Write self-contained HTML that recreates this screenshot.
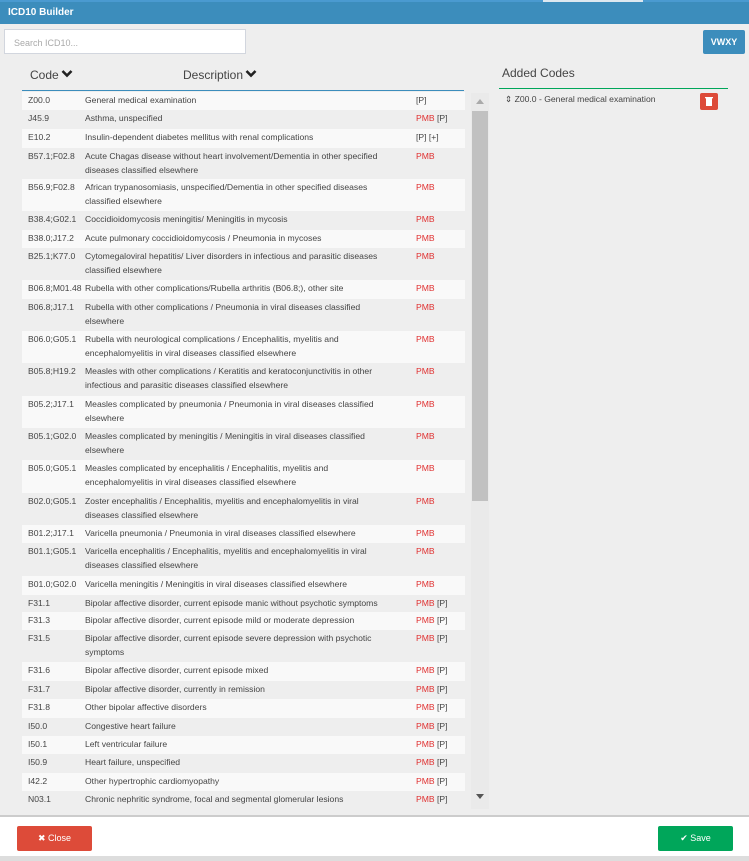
<!DOCTYPE html>
<html><head><meta charset="utf-8"><style>
*{box-sizing:border-box;margin:0;padding:0}
body{width:749px;height:861px;background:#eee;font-family:"Liberation Sans",sans-serif;position:relative;overflow:hidden;color:#333}
.hdr{position:absolute;left:0;top:0;width:749px;height:24px;background:#3c8dbc;border-top:2px solid #4a9ad0}
.hdr span{position:absolute;left:8px;top:5px;color:#fff;font-size:10px;font-weight:bold}
.tab{position:absolute;left:543px;top:0;width:100px;height:2px;background:#dde8f0}
.search{position:absolute;left:4px;top:29px;width:242px;height:25px;background:#fff;border:1px solid #d2d6de;font-size:9px;color:#aaa;padding:8px 9px}
.vw{position:absolute;left:703px;top:30px;width:42px;height:24px;background:#3c8dbc;border-radius:2px;color:#fff;font-size:9px;font-weight:bold;text-align:center;line-height:24px}
.th{position:absolute;top:68px;font-size:12px;color:#444}
.th svg{vertical-align:1px;margin-left:2px}
.line{position:absolute;left:22px;top:90px;width:442px;height:1px;background:#3c8dbc}
.row{position:absolute;left:22px;width:443px;font-size:8.6px;color:#444;line-height:14px;white-space:nowrap}
.row .c{position:absolute;left:6px;top:1px}
.row .d{position:absolute;left:63px;top:1px}
.row .p{position:absolute;left:394px;top:1px}
.r{color:#e03030}
.l{background:#f9f9f9}
.sb{position:absolute;left:471px;top:93px;width:18px;height:716px;background:#eaeaea}
.thumb{position:absolute;left:472px;top:111px;width:16px;height:390px;background:#c1c1c1}
.ac{position:absolute;left:502px;top:66px;font-size:12px;color:#444}
.gl{position:absolute;left:499px;top:88px;width:229px;height:1px;background:#00a65a}
.it{position:absolute;left:505px;top:94px;font-size:8.6px;color:#444}
.del{position:absolute;left:700px;top:93px;width:18px;height:17px;background:#dd4b39;border-radius:2px}
.foot{position:absolute;left:0;top:815px;width:749px;height:41px;background:#fff;border-top:2px solid #ccc}
.bb{position:absolute;left:0;top:856px;width:749px;height:5px;background:#ddd}
.btn{position:absolute;top:826px;height:25px;border-radius:2px;color:#fff;font-size:9px;text-align:center;line-height:25px}
</style></head><body>
<div class="hdr"><span>ICD10 Builder</span></div>
<div class="tab"></div>
<div class="search">Search ICD10...</div>
<div class="vw">VWXY</div>
<div class="th" style="left:30px">Code<svg width="12" height="9"><path d="M1.5 2L6 6.5L10.5 2" stroke="#222" stroke-width="2.6" fill="none"/></svg></div>
<div class="th" style="left:183px">Description<svg width="12" height="9"><path d="M1.5 2L6 6.5L10.5 2" stroke="#222" stroke-width="2.6" fill="none"/></svg></div>
<div class="line"></div>

<div class="row l" style="top:92px;height:18px"><span class="c">Z00.0</span><span class="d">General medical examination</span><span class="p">[P]</span></div>
<div class="row" style="top:110px;height:19px"><span class="c">J45.9</span><span class="d">Asthma, unspecified</span><span class="p"><span class="r">PMB</span> [P]</span></div>
<div class="row l" style="top:129px;height:19px"><span class="c">E10.2</span><span class="d">Insulin-dependent diabetes mellitus with renal complications</span><span class="p">[P] [+]</span></div>
<div class="row" style="top:148px;height:31px"><span class="c">B57.1;F02.8</span><span class="d">Acute Chagas disease without heart involvement/Dementia in other specified<br>diseases classified elsewhere</span><span class="p r">PMB</span></div>
<div class="row l" style="top:179px;height:32px"><span class="c">B56.9;F02.8</span><span class="d">African trypanosomiasis, unspecified/Dementia in other specified diseases<br>classified elsewhere</span><span class="p r">PMB</span></div>
<div class="row" style="top:211px;height:19px"><span class="c">B38.4;G02.1</span><span class="d">Coccidioidomycosis meningitis/ Meningitis in mycosis</span><span class="p r">PMB</span></div>
<div class="row l" style="top:230px;height:18px"><span class="c">B38.0;J17.2</span><span class="d">Acute pulmonary coccidioidomycosis / Pneumonia in mycoses</span><span class="p r">PMB</span></div>
<div class="row" style="top:248px;height:32px"><span class="c">B25.1;K77.0</span><span class="d">Cytomegaloviral hepatitis/ Liver disorders in infectious and parasitic diseases<br>classified elsewhere</span><span class="p r">PMB</span></div>
<div class="row l" style="top:280px;height:19px"><span class="c">B06.8;M01.48</span><span class="d">Rubella with other complications/Rubella arthritis (B06.8;), other site</span><span class="p r">PMB</span></div>
<div class="row" style="top:299px;height:32px"><span class="c">B06.8;J17.1</span><span class="d">Rubella with other complications / Pneumonia in viral diseases classified<br>elsewhere</span><span class="p r">PMB</span></div>
<div class="row l" style="top:331px;height:32px"><span class="c">B06.0;G05.1</span><span class="d">Rubella with neurological complications / Encephalitis, myelitis and<br>encephalomyelitis in viral diseases classified elsewhere</span><span class="p r">PMB</span></div>
<div class="row" style="top:363px;height:33px"><span class="c">B05.8;H19.2</span><span class="d">Measles with other complications / Keratitis and keratoconjunctivitis in other<br>infectious and parasitic diseases classified elsewhere</span><span class="p r">PMB</span></div>
<div class="row l" style="top:396px;height:32px"><span class="c">B05.2;J17.1</span><span class="d">Measles complicated by pneumonia / Pneumonia in viral diseases classified<br>elsewhere</span><span class="p r">PMB</span></div>
<div class="row" style="top:428px;height:32px"><span class="c">B05.1;G02.0</span><span class="d">Measles complicated by meningitis / Meningitis in viral diseases classified<br>elsewhere</span><span class="p r">PMB</span></div>
<div class="row l" style="top:460px;height:33px"><span class="c">B05.0;G05.1</span><span class="d">Measles complicated by encephalitis / Encephalitis, myelitis and<br>encephalomyelitis in viral diseases classified elsewhere</span><span class="p r">PMB</span></div>
<div class="row" style="top:493px;height:32px"><span class="c">B02.0;G05.1</span><span class="d">Zoster encephalitis / Encephalitis, myelitis and encephalomyelitis in viral<br>diseases classified elsewhere</span><span class="p r">PMB</span></div>
<div class="row l" style="top:525px;height:18px"><span class="c">B01.2;J17.1</span><span class="d">Varicella pneumonia / Pneumonia in viral diseases classified elsewhere</span><span class="p r">PMB</span></div>
<div class="row" style="top:543px;height:33px"><span class="c">B01.1;G05.1</span><span class="d">Varicella encephalitis / Encephalitis, myelitis and encephalomyelitis in viral<br>diseases classified elsewhere</span><span class="p r">PMB</span></div>
<div class="row l" style="top:576px;height:19px"><span class="c">B01.0;G02.0</span><span class="d">Varicella meningitis / Meningitis in viral diseases classified elsewhere</span><span class="p r">PMB</span></div>
<div class="row" style="top:595px;height:17px"><span class="c">F31.1</span><span class="d">Bipolar affective disorder, current episode manic without psychotic symptoms</span><span class="p"><span class="r">PMB</span> [P]</span></div>
<div class="row l" style="top:612px;height:18px"><span class="c">F31.3</span><span class="d">Bipolar affective disorder, current episode mild or moderate depression</span><span class="p"><span class="r">PMB</span> [P]</span></div>
<div class="row" style="top:630px;height:32px"><span class="c">F31.5</span><span class="d">Bipolar affective disorder, current episode severe depression with psychotic<br>symptoms</span><span class="p"><span class="r">PMB</span> [P]</span></div>
<div class="row l" style="top:662px;height:19px"><span class="c">F31.6</span><span class="d">Bipolar affective disorder, current episode mixed</span><span class="p"><span class="r">PMB</span> [P]</span></div>
<div class="row" style="top:681px;height:18px"><span class="c">F31.7</span><span class="d">Bipolar affective disorder, currently in remission</span><span class="p"><span class="r">PMB</span> [P]</span></div>
<div class="row l" style="top:699px;height:19px"><span class="c">F31.8</span><span class="d">Other bipolar affective disorders</span><span class="p"><span class="r">PMB</span> [P]</span></div>
<div class="row" style="top:718px;height:18px"><span class="c">I50.0</span><span class="d">Congestive heart failure</span><span class="p"><span class="r">PMB</span> [P]</span></div>
<div class="row l" style="top:736px;height:18px"><span class="c">I50.1</span><span class="d">Left ventricular failure</span><span class="p"><span class="r">PMB</span> [P]</span></div>
<div class="row" style="top:754px;height:19px"><span class="c">I50.9</span><span class="d">Heart failure, unspecified</span><span class="p"><span class="r">PMB</span> [P]</span></div>
<div class="row l" style="top:773px;height:18px"><span class="c">I42.2</span><span class="d">Other hypertrophic cardiomyopathy</span><span class="p"><span class="r">PMB</span> [P]</span></div>
<div class="row" style="top:791px;height:18px"><span class="c">N03.1</span><span class="d">Chronic nephritic syndrome, focal and segmental glomerular lesions</span><span class="p"><span class="r">PMB</span> [P]</span></div>

<div class="sb"></div>
<div class="thumb"></div>
<svg style="position:absolute;left:475px;top:98px" width="10" height="8"><path d="M1 6L5 1L9 6Z" fill="#aaa"/></svg>
<svg style="position:absolute;left:475px;top:792px" width="10" height="8"><path d="M1 2L5 7L9 2Z" fill="#555"/></svg>

<div class="ac">Added Codes</div>
<div class="gl"></div>
<div class="it">&#8661; Z00.0 - General medical examination</div>
<div class="del"><svg width="18" height="17"><rect x="6" y="5" width="6" height="8" fill="#fff"/><rect x="5" y="4" width="8" height="1.3" fill="#fff"/></svg></div>

<div class="foot"></div>
<div class="bb"></div>
<div class="btn" style="left:17px;width:75px;background:#dd4b39">&#10006; Close</div>
<div class="btn" style="left:658px;width:75px;background:#00a65a">&#10004; Save</div>
</body></html>
